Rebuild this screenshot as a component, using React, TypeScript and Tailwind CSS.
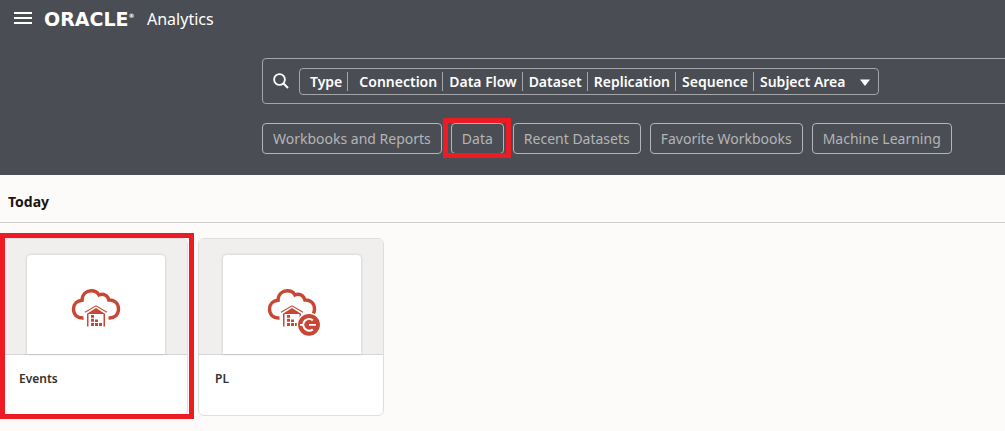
import React from "react";

const filterTypes = ["Type", "Connection", "Data Flow", "Dataset", "Replication", "Sequence", "Subject Area"];

const shortcuts = [
  { label: "Workbooks and Reports" },
  { label: "Data", highlighted: true },
  { label: "Recent Datasets" },
  { label: "Favorite Workbooks" },
  { label: "Machine Learning" },
];

function MenuIcon() {
  return (
    <svg className="block h-4 w-[18px]" viewBox="0 0 18 16" fill="#fff" aria-hidden="true">
      <rect x="0" y="1" width="18" height="2" />
      <rect x="0" y="6" width="18" height="2" />
      <rect x="0" y="11" width="18" height="2" />
    </svg>
  );
}

function SearchIcon() {
  return (
    <svg className="block size-4 shrink-0" viewBox="0 0 16 16" fill="none" stroke="#fff" aria-hidden="true">
      <circle cx="6.5" cy="6.5" r="5.4" strokeWidth="1.8" />
      <path d="M10.5 10.5 L15 15" strokeWidth="2" />
    </svg>
  );
}

function WarehouseCloud({ connection = false }: { connection?: boolean }) {
  return (
    <svg className="block h-12 w-14 overflow-visible" viewBox="-2 0.5 56 48" aria-hidden="true">
      <path
        d="M13.5 29.5 C7 30 3.5 26 3.5 20.5 C3.5 15.5 7 12.2 12 11.8 C12.3 5.6 16.4 2.3 21.4 2.3 C24.8 2.3 27.4 3.8 28.9 6.5 C33.2 4.6 37.8 7 38.8 11.5 C44.9 11.2 48.5 15.2 48.5 20.5 C48.5 26 44.8 29.8 38.5 29.4"
        fill="none"
        stroke="#c74634"
        strokeWidth="3.4"
      />
      <path d="M15 23.7 L26 17.3 L37 23.7" fill="none" stroke="#c74634" strokeWidth="1.1" />
      <path d="M17 25.2 L26 19.5 L35 25.2 V38 H33.5 V25.5 H18.5 V38 H17 Z" fill="#c74634" />
      <path
        d="M21 26.5h3v2.8h-3z M21 30.3h3v3h-3z M21 34.5h3v3h-3z M25 30.9h3v2.6h-3z M25 34.5h3v3h-3z M29 34.5h3v3h-3z"
        fill="#c74634"
      />
      {connection && (
        <g>
          <circle cx="43" cy="36.3" r="12.3" fill="#fff" />
          <circle cx="43" cy="36.3" r="10.9" fill="#c74634" />
          <path d="M46.8 31.8 A5.8 5.8 0 1 0 46.8 40.8" fill="none" stroke="#fff" strokeWidth="2.2" />
          <path d="M34 36.3 H37.5 M43 36.3 H50" fill="none" stroke="#fff" strokeWidth="1.8" />
        </g>
      )}
    </svg>
  );
}

function DatasetCard({ name, connection, highlighted }: { name: string; connection?: boolean; highlighted?: boolean }) {
  return (
    <div className="relative w-[186px]">
      <a href="#" className="block overflow-hidden rounded-md border border-[#dfdedc] bg-white">
        <div className="flex h-[116px] border-b border-[#d6d5d3] bg-[#f0efed] pt-4 pl-6">
          <div className="flex w-[138px] justify-center rounded-t-sm bg-white pt-[34px] shadow-[0_0_3px_rgba(0,0,0,0.2)]">
            <WarehouseCloud connection={connection} />
          </div>
        </div>
        <div className="h-[60px] px-4 pt-[14px] text-xs leading-5 font-semibold text-[#33302e]">{name}</div>
      </a>
      {highlighted && (
        <div className="pointer-events-none absolute -top-[5px] -right-[6px] -bottom-[3px] -left-[2px] border-[5px] border-[#ed1c24]" />
      )}
    </div>
  );
}

export default function App() {
  return (
    <div className="min-h-screen overflow-x-hidden bg-[#fcfbfa] font-['Noto_Sans',sans-serif]">
      <header className="bg-[#4a4d53] pb-[21px]">
        <div className="flex h-[38px] items-center pl-[14px] text-white">
          <button type="button" aria-label="Navigation menu" className="mr-3">
            <MenuIcon />
          </button>
          <div className="flex w-[103px] items-center font-['DejaVu_Sans',sans-serif] text-[19px] leading-6 font-bold">
            ORACLE<sup className="text-[6px]">®</sup>
          </div>
          <span className="text-base leading-6">Analytics</span>
        </div>
        <div className="pt-5 pl-[262px]">
          <div className="-mr-2 flex h-[46px] items-center rounded border border-[#a5a6a9] pl-[10px]">
            <button type="button" aria-label="Search" className="mr-[10px]">
              <SearchIcon />
            </button>
            <button
              type="button"
              className="flex h-[27px] items-center rounded border border-[#a5a6a9] pl-[10px] text-sm font-semibold whitespace-nowrap text-white"
            >
              {filterTypes.map((type, i) => (
                <React.Fragment key={type}>
                  {i > 0 && (
                    <span className={i === 1 ? "mr-[11px] ml-[5px] h-[19px] w-px bg-[#a5a6a9]" : "mr-[6px] ml-[5px] h-[19px] w-px bg-[#a5a6a9]"} />
                  )}
                  <span className="pt-[2px]">{type}</span>
                </React.Fragment>
              ))}
              <svg className="mt-[2px] mr-2 ml-[15px] h-[7px] w-[10px]" viewBox="0 0 10 7" fill="#fff" aria-hidden="true">
                <path d="M0 0.5 H10 L5 7 Z" />
              </svg>
            </button>
          </div>
          <div className="mt-[19px] flex gap-[9px]">
            {shortcuts.map(({ label, highlighted }) => (
              <div key={label} className="relative">
                <button
                  type="button"
                  className="h-[31px] rounded border border-[#b4b5b7] px-[10px] text-sm whitespace-nowrap text-[#b4b5b7]"
                >
                  {label}
                </button>
                {highlighted && (
                  <div className="pointer-events-none absolute -top-[5px] -right-[7px] -bottom-1 -left-2 border-[5px] border-[#ed1c24]" />
                )}
              </div>
            ))}
          </div>
        </div>
      </header>
      <main>
        <h2 className="border-b border-[#d0cfcd] px-2 pt-[15px] pb-2 text-sm leading-6 font-bold text-[#161513]">Today</h2>
        <div className="flex flex-wrap gap-[10px] pt-[15px] pl-[2px]">
          <DatasetCard name="Events" highlighted />
          <DatasetCard name="PL" connection />
        </div>
      </main>
    </div>
  );
}
